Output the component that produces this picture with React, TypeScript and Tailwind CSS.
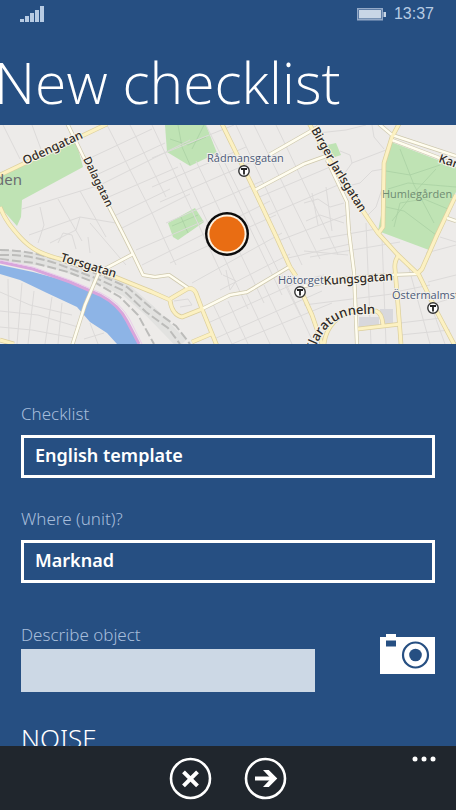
import React, { useState } from "react";

const parks = [
  "M0 50 24 39 76 16 83 42 22 75 21 92 17 101 0 82Z",
  "M165 0 167 27 190 41 217 28 206 0Z",
  "M168 98 195 83 204 97 178 115 173 112Z",
  "M327 20 336 18 341 30 332 33Z",
  "M329 36 339 44 335 53Z",
  "M391 17 456 42 456 67 437 107 429 125 378 106 383 80 384 38Z",
];

const minorStreets = [
  // west blocks
  "M3 0 20 34M32 0 42 27M107 0 152 88 176 140M130 0 166 72M88 34 152 4M94 51 165 18M22 84 100 60 190 15M104 74 178 42M112 92 170 64M118 105 190 69M29 110 80 92 116 98M40 82 44 100 38 118M58 74 82 116M80 66 106 112M80 92 76 105 50 118M58 118 63 108 72 110 76 124M88 112 90 128M90 98 126 140",
  // between Dalagatan and Sveavagen
  "M152 0 222 150M180 38 248 184M196 36 264 178M214 28 282 170M206 0 300 190M152 33 234 0M152 62 246 22M160 77 252 37M166 98 262 56M136 125 204 96M142 140 270 76M170 138 276 90M192 158 282 108M220 165 290 129M226 145 230 165 236 156 223 150M174 176 188 174 192 180 180 182",
  // southern blocks
  "M208 198 300 156M214 214 322 166M232 219 332 178M228 176 248 219M246 168 270 219M264 160 292 219M282 150 314 219M212 177 232 219",
  // east side
  "M236 0 302 140M254 0 320 134M276 0 338 130M257 73 330 42M266 91 338 60M278 116 346 90M288 133 350 119M291 158 324 150M304 180 400 168M310 132 400 117M320 114 376 104M304 126 348 130M366 98 371 219M382 112 386 219M408 140 430 219M420 150 445 219M400 166 430 160M400 198 441 193M400 210 450 205M428 157 456 150M436 178 456 172M426 128 456 120M440 112 456 117",
  "M318 8 346 5 366 0M340 26 350 30 352 38 386 25M352 38 342 52M372 0 374 12 384 24M344 62 360 58 372 46 384 44M366 92 376 82 382 64M304 78 318 74 330 82 344 78M306 96 320 90 344 98M312 68 318 100M326 62 332 106",
  // south-west blocks
  "M0 167 30 180 72 190M0 186 38 190 78 202M0 202 32 205 74 213M8 154 9 219M22 158 17 219M34 166 28 219M52 172 45 219M62 178 58 219M90 198 98 219M104 208 84 214",
];

const parkPaths = [
  "M400 24 414 60 434 98M388 64 408 58 456 62M392 96 412 70 436 44M386 82 404 86 436 110M386 46 410 50 440 40M394 102 400 78 424 74 448 84",
  "M170 14 188 20 206 12M178 0 182 22 190 40M204 0 192 24M172 101 198 90M181 92 188 108",
];

// wider casing is drawn first, then the fill on top of it
const yellowRoads = [
  "M0 50 107 -1",
  "M0 82C5 95 12 103 20 112C30 123 40 129 60 134L115 152 152 167 170 175",
  "M170 175C171 185 176 191 182 192L202 184 196 168Q193 162 187 164L170 174",
  "M202 184 217 221M192 217 211 209",
  "M222 -1 250 56 275 109 290 142 296 151",
  "M303 170 312 190 322 219",
  "M309 -2 328 33 367 92 378 108 397 129 419 150 437 187 455 221",
  "M399 -1 392 12 384 38 383 102 378 109",
  "M456 70 437 110 422 144 417 149",
  "M399 130Q394 136 395 144L398 180 401 219",
  "M324 219C326 202 338 188 356 186H376Q382 188 383 200M358 204 401 199",
  "M0 215 14 219",
];

const whiteRoads = [
  "M67 -2 83 31 123 109 133 129 143 150 155 152 169 150 188 163",
  "M133 129 99 147 85 180 72 221",
  "M202 184 230 170 247 167 289 142",
  "M269 30 304 10 318 2M255 65 304 39 329 30",
  "M327 35 347 77 349 107 354 147 357 219",
  "M379 -1 392 10 456 31M392 15 437 32 456 41",
  "M417 149 389 150 350 153 304 161",
  "M447 93 456 96",
];

const rails = [
  "M0 125Q28 125 58 135L100 150 127 162 150 182 176 201 190 219",
  "M0 130Q28 129 58 139L98 154 124 166 146 187 168 203 180 219",
  "M0 134 34 138 68 147 96 158 120 172 138 190 154 219",
];

function Station({ x, y }: { x: number; y: number }) {
  return (
    <g>
      <circle cx={x} cy={y} r="5.2" fill="#fff" stroke="#333" strokeWidth="1.4" />
      <path d={`M${x - 3} ${y - 2}h6M${x} ${y - 2}v5.5`} stroke="#222" strokeWidth="1.8" fill="none" />
    </g>
  );
}

function CityMap() {
  return (
    <svg
      viewBox="0 0 456 219"
      className="block h-auto w-full bg-[#edebe9] font-['Noto_Sans','Open_Sans',sans-serif]"
      role="img"
      aria-label="Map"
    >
      {parks.map((d) => (
        <path key={d} d={d} fill="#bfe3b4" />
      ))}
      <g fill="none" stroke="#aad0a3" strokeWidth="0.8">
        {parkPaths.map((d) => (
          <path key={d} d={d} />
        ))}
      </g>
      <g fill="none" stroke="#dcdad9" strokeWidth="1">
        {minorStreets.map((d) => (
          <path key={d} d={d} />
        ))}
      </g>
      <path d="M359 192h20v10h-20zM380 184h13v15h-13z" fill="#d8d8dc" />

      <path
        d="M0 140 33 147 70 157 97 168 118 182 130 200 138 219H117L107 208 90 197 77 182 47 168 20 155 0 149Z"
        fill="#8db4e6"
      />
      <path d="M0 130 50 136 100 153 127 166 150 186 182 219" fill="none" stroke="#e2e2e0" strokeWidth="12" />
      <g fill="none" stroke="#bcbcba" strokeWidth="2" strokeDasharray="9 3">
        {rails.map((d) => (
          <path key={d} d={d} />
        ))}
      </g>
      <path d="M0 137 33 144 70 157 100 170Q119 180 127 196L139 219" fill="none" stroke="#d9a5dc" strokeWidth="3" />
      <path d="M0 135 33 142 70 155 101 168Q121 178 130 195L142 219" fill="none" stroke="#e9cdea" strokeWidth="1" />

      <g fill="none" strokeLinejoin="round">
        {whiteRoads.map((d) => (
          <path key={d} d={d} stroke="#cfc9ae" strokeWidth="4" />
        ))}
        {yellowRoads.map((d) => (
          <path key={d} d={d} stroke="#dccf9c" strokeWidth="4.6" />
        ))}
        {whiteRoads.map((d) => (
          <path key={d} d={d} stroke="#fffdf0" strokeWidth="2.6" />
        ))}
        {yellowRoads.map((d) => (
          <path key={d} d={d} stroke="#fcf1c2" strokeWidth="3.2" />
        ))}
      </g>

      <defs>
        <path id="birger" d="M311 5 332 43 378 116" />
        <path id="klara" d="M314 228C320 206 334 193 352 190Q368 188 410 189" />
      </defs>
      <g
        className="font-['Open_Sans',sans-serif]"
        fill="#4c5a78"
        stroke="#f1f0ee"
        strokeWidth="2"
        paintOrder="stroke"
        fontSize="11"
      >
        <text x="207" y="37">Rådmansgatan</text>
        <text x="278" y="159">Hötorget</text>
        <text x="392" y="174">Östermalmstorg</text>
      </g>
      <g fill="#2f2a26" stroke="#f5f2ea" strokeWidth="2" paintOrder="stroke" fontSize="12" fontWeight="500">
        <text transform="translate(25 40) rotate(-25)">Odengatan</text>
        <text transform="translate(83 34) rotate(64)" fontSize="11">
          Dalagatan
        </text>
        <text transform="translate(60 136) rotate(17)">Torsgatan</text>
        <text transform="translate(324 160) rotate(-4)">Kungsgatan</text>
        <text transform="translate(438 37) rotate(18)">Karlavägen</text>
        <text>
          <textPath href="#birger">Birger Jarlsgatan</textPath>
        </text>
        <text fontSize="13">
          <textPath href="#klara">Klaratunneln</textPath>
        </text>
      </g>
      <text x="382" y="73" fontSize="11" fill="#6f8c72" className="font-['Open_Sans',sans-serif]">
        Humlegården
      </text>
      <text x="22" y="60" textAnchor="end" fontSize="15" fill="#6b6b70">
        den
      </text>
      <Station x={244} y={46} />
      <Station x={300} y={167} />
      <Station x={433} y={183} />

      <circle cx="227" cy="109" r="22" fill="#0b0b0b" />
      <circle cx="227" cy="109" r="19.6" fill="#fdf3e4" />
      <circle cx="227" cy="109" r="17.6" fill="#e96d13" />
    </svg>
  );
}

function StatusBar() {
  return (
    <div className="flex h-7 items-center justify-between pl-5 pr-[22px] text-[#b7cbe3]">
      <svg width="24" height="17" viewBox="0 0 24 17" fill="currentColor" aria-hidden="true">
        <path d="M0 13h4v3H0zM5 10h4v6H5zM10 7h4v9h-4zM15 4h4v12h-4zM20 0h4v16h-4z" />
      </svg>
      <div className="flex items-center gap-2">
        <svg width="29" height="13" viewBox="0 0 29 13" aria-hidden="true">
          <path d="M.75.75h24.5v11H.75z" fill="none" stroke="#94aac8" strokeWidth="1.5" />
          <path d="M2 2h22v8.500H2zM26.500 4H29v5h-2.500z" fill="#c8d6e6" />
        </svg>
        <span className="font-['Liberation_Sans',sans-serif] text-base leading-7">13:37</span>
      </div>
    </div>
  );
}

const labelClass = "block text-[17px] font-light leading-5 text-[#a6bddb]";
const selectClass =
  "block h-[43px] w-full appearance-none rounded-none border-3 border-white bg-transparent px-[11px] pb-1 text-lg font-semibold text-white outline-none";

export default function App() {
  const [template, setTemplate] = useState("English template");
  const [unit, setUnit] = useState("Marknad");
  const [description, setDescription] = useState("");

  return (
    <div className="flex h-screen flex-col overflow-hidden bg-[#264f82] font-['Noto_Sans','Open_Sans',sans-serif] text-white">
      <StatusBar />
      <h1 className="-ml-1.5 h-[97px] whitespace-nowrap pt-5 font-['Open_Sans',sans-serif] text-[57px] font-light leading-[68px]">
        New checklist
      </h1>
      <main className="min-h-0 flex-1 overflow-hidden">
        <CityMap />
        <form className="px-[21px] pt-[60px]">
          <label htmlFor="template" className={labelClass}>
            Checklist
          </label>
          <select
            id="template"
            value={template}
            onChange={(e) => setTemplate(e.target.value)}
            className={`${selectClass} mt-[11px]`}
          >
            <option>English template</option>
          </select>

          <label htmlFor="unit" className={`${labelClass} mt-[31px]`}>
            Where (unit)?
          </label>
          <select
            id="unit"
            value={unit}
            onChange={(e) => setUnit(e.target.value)}
            className={`${selectClass} mt-[11px]`}
          >
            <option>Marknad</option>
          </select>

          <div className="mt-[42px] flex items-start justify-between gap-16">
            <div className="flex-1">
              <label htmlFor="description" className={labelClass}>
                Describe object
              </label>
              <input
                id="description"
                type="text"
                value={description}
                onChange={(e) => setDescription(e.target.value)}
                className="mt-1 block h-[43px] w-full bg-[#ccd8e5] px-3 text-lg text-black outline-none"
              />
            </div>
            <button type="button" aria-label="Take photo" className="mt-[9px]">
              <svg width="56" height="41" viewBox="-1 0 56 41">
                <path d="M0 3h6V0h10v3h39v37H0z" fill="#fff" />
                <path d="M6 6.500h10v6H6z" fill="#264f82" />
                <circle cx="35.500" cy="21" r="12.500" fill="none" stroke="#264f82" strokeWidth="2.200" />
                <circle cx="35.500" cy="21" r="6.300" fill="#264f82" />
              </svg>
            </button>
          </div>

          <h2 className="mt-7 text-[26px] font-light leading-9">NOISE</h2>
        </form>
      </main>

      <footer className="grid h-16 shrink-0 grid-cols-[1fr_auto_1fr] bg-[#20262d]">
        <div />
        <div className="flex items-center gap-8">
          <button type="button" aria-label="Cancel">
            <svg width="43" height="43" viewBox="0 0 43 43" fill="none" stroke="#fff">
              <circle cx="21.500" cy="21.500" r="19.500" strokeWidth="2.600" />
              <path d="M14.500 14.800 28.500 28.800M28.500 14.800 14.500 28.800" strokeWidth="4" />
            </svg>
          </button>
          <button type="button" aria-label="Next">
            <svg width="43" height="43" viewBox="0 0 43 43" fill="none" stroke="#fff">
              <circle cx="21.500" cy="21.500" r="19.500" strokeWidth="2.600" />
              <path d="M11 21.500H30" strokeWidth="4" />
              <path d="M19 13H24.800L33.300 21.500 24.800 30H19L27 21.500Z" fill="#fff" stroke="none" />
            </svg>
          </button>
        </div>
        <button type="button" aria-label="More" className="mr-5 mt-2.5 self-start justify-self-end">
          <svg width="24" height="6" viewBox="0 0 24 6" fill="#fff">
            <circle cx="3" cy="3" r="2.500" />
            <circle cx="12" cy="3" r="2.500" />
            <circle cx="21" cy="3" r="2.500" />
          </svg>
        </button>
      </footer>
    </div>
  );
}
